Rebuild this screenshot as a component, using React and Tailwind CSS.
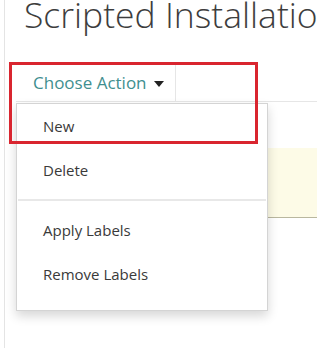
export default function App() {
  const items1 = ['New', 'Delete'];
  const items2 = ['Apply Labels', 'Remove Labels'];

  return (
    <div className="relative w-[317px] h-[348px] overflow-hidden bg-white font-['Open_Sans',sans-serif]">
      <div className="ml-[4px] h-full border-l border-[#e4e4e4] pl-[11px]">
        {/* Page title */}
        <h1 className="ml-[8px] whitespace-nowrap text-[35.5px] font-light leading-[29px] text-[#3d3d3d]">
          Scripted Installation
        </h1>

        {/* Tabs */}
        <div className="mt-[36px] flex border-b border-[#e6e6e6]">
          <div className="flex h-[36px] w-[160px] items-center border-r border-[#e6e6e6] pl-[17px]">
            <span className="text-[17px] text-[#3f8f8f]">Choose Action</span>
            <svg className="ml-[7px] mt-[2px]" width="10" height="6" viewBox="0 0 10 6">
              <path d="M0 0h10L5 6z" fill="#222" />
            </svg>
          </div>
        </div>

        {/* Notice box behind the menu */}
        <div className="mt-[46px] h-[70px] border-b border-[#b9b79f] bg-[#fdfbe7]" />
      </div>

      {/* Dropdown menu */}
      <div className="absolute left-[16px] top-[103px] w-[252px] border border-[#d4d4d4] bg-white pb-[14px] shadow-[0_5px_10px_rgba(0,0,0,0.16)]">
        {items1.map((t) => (
          <div key={t} className="flex h-[44px] items-center pl-[26px] text-[15px] text-[#3a3a3a]">
            {t}
          </div>
        ))}
        <div className="mx-[1px] my-[7px] h-[2px] bg-[#e8e8e8]" />
        {items2.map((t) => (
          <div key={t} className="flex h-[44px] items-center pl-[26px] text-[15px] text-[#3a3a3a]">
            {t}
          </div>
        ))}
      </div>

      {/* Highlight annotation */}
      <div className="absolute left-[9px] top-[62px] h-[82px] w-[249px] border-[3px] border-[#d9252f]" />
    </div>
  );
}
